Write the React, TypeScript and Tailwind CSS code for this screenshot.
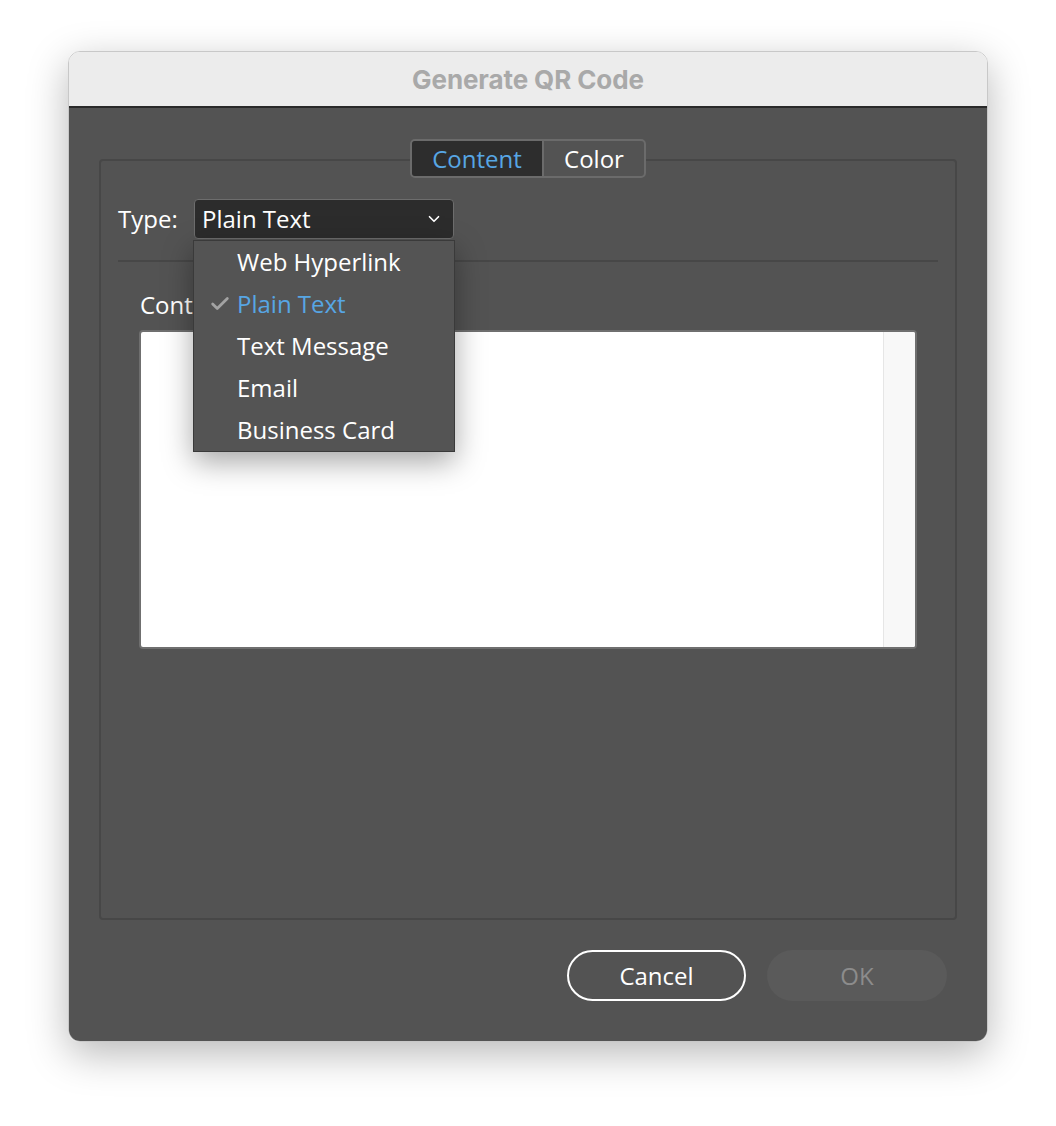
import { Check, ChevronDown } from 'lucide-react';

const menuItems = ['Web Hyperlink', 'Plain Text', 'Text Message', 'Email', 'Business Card'];

export default function App() {
  return (
    <div className="min-h-[1126px] bg-white pl-[68px] pt-[51px] font-['Open_Sans',sans-serif] font-medium">
      <div className="flex h-[991px] w-[920px] flex-col overflow-hidden rounded-[12px] border border-[#c8c8c8] shadow-[0_12px_40px_rgba(0,0,0,0.28)]">
        {/* title bar */}
        <div className="flex h-[56px] shrink-0 items-center justify-center border-b-2 border-[#2a2a2a] bg-[#ececec]">
          <span className="font-['Inter',sans-serif] text-[26px] font-bold tracking-[-0.1px] text-[#a9a9a9]">
            Generate QR Code
          </span>
        </div>

        <div className="flex flex-1 flex-col bg-[#535353] px-[30px] pt-[51px] text-white">
          {/* group box */}
          <div className="relative h-[761px] rounded-[4px] border-2 border-[#474747]">
            <div className="absolute left-1/2 top-[-22px] flex h-[39px] -translate-x-1/2 overflow-hidden rounded-[5px] border-2 border-[#6b6b6b] bg-[#535353] text-[24px] leading-none">
              <div className="flex w-[130px] items-center justify-center bg-[#2d2d2d] text-[#57a6e4]">Content</div>
              <div className="flex w-[102px] items-center justify-center border-l-2 border-[#6b6b6b] text-white">Color</div>
            </div>

            <div className="flex items-center pl-[17px] pt-[38px]">
              <span className="w-[76px] text-[24px]">Type:</span>
              <div className="relative">
                <div className="flex h-[40px] w-[260px] items-center justify-between rounded-[4px] border border-[#6d6d6d] bg-[#2c2c2c] pl-[7px] pr-[10px] text-[24px]">
                  <span>Plain Text</span>
                  <ChevronDown className="h-[18px] w-[18px]" strokeWidth={2.2} />
                </div>
                {/* dropdown menu */}
                <div className="absolute left-[-1px] top-[41px] z-10 w-[262px] border border-[#3a3a3a] bg-[#545454] shadow-[0_10px_28px_rgba(0,0,0,0.35)]">
                  {menuItems.map((item) => (
                    <div key={item} className="flex h-[42px] items-center text-[24px]">
                      <span className="flex w-[43px] justify-end pr-[6px]">
                        {item === 'Plain Text' && <Check className="h-[22px] w-[22px] text-[#a3a3a3]" strokeWidth={3} />}
                      </span>
                      <span className={item === 'Plain Text' ? 'text-[#57a6e4]' : 'text-white'}>{item}</span>
                    </div>
                  ))}
                </div>
              </div>
            </div>

            <div className="mx-[17px] mt-[21px] h-[2px] bg-[#474747]" />

            <div className="pl-[39px] pt-[31px] text-[24px] leading-none">Content:</div>

            <div className="mx-[38px] mt-[13px] flex h-[319px] overflow-hidden rounded-[4px] border-2 border-[#6f6f6f] bg-white">
              <div className="flex-1" />
              <div className="w-[32px] border-l border-[#e6e6e6] bg-[#f8f8f8]" />
            </div>
          </div>

          {/* buttons */}
          <div className="flex justify-end gap-[21px] pr-[10px] pt-[30px]">
            <button className="flex h-[51px] w-[179px] items-center justify-center rounded-full border-2 border-white text-[24px] text-white">
              Cancel
            </button>
            <button className="flex h-[51px] w-[180px] items-center justify-center rounded-full bg-[#5a5a5a] text-[24px] text-[#8c8c8c]">
              OK
            </button>
          </div>
        </div>
      </div>
    </div>
  );
}
